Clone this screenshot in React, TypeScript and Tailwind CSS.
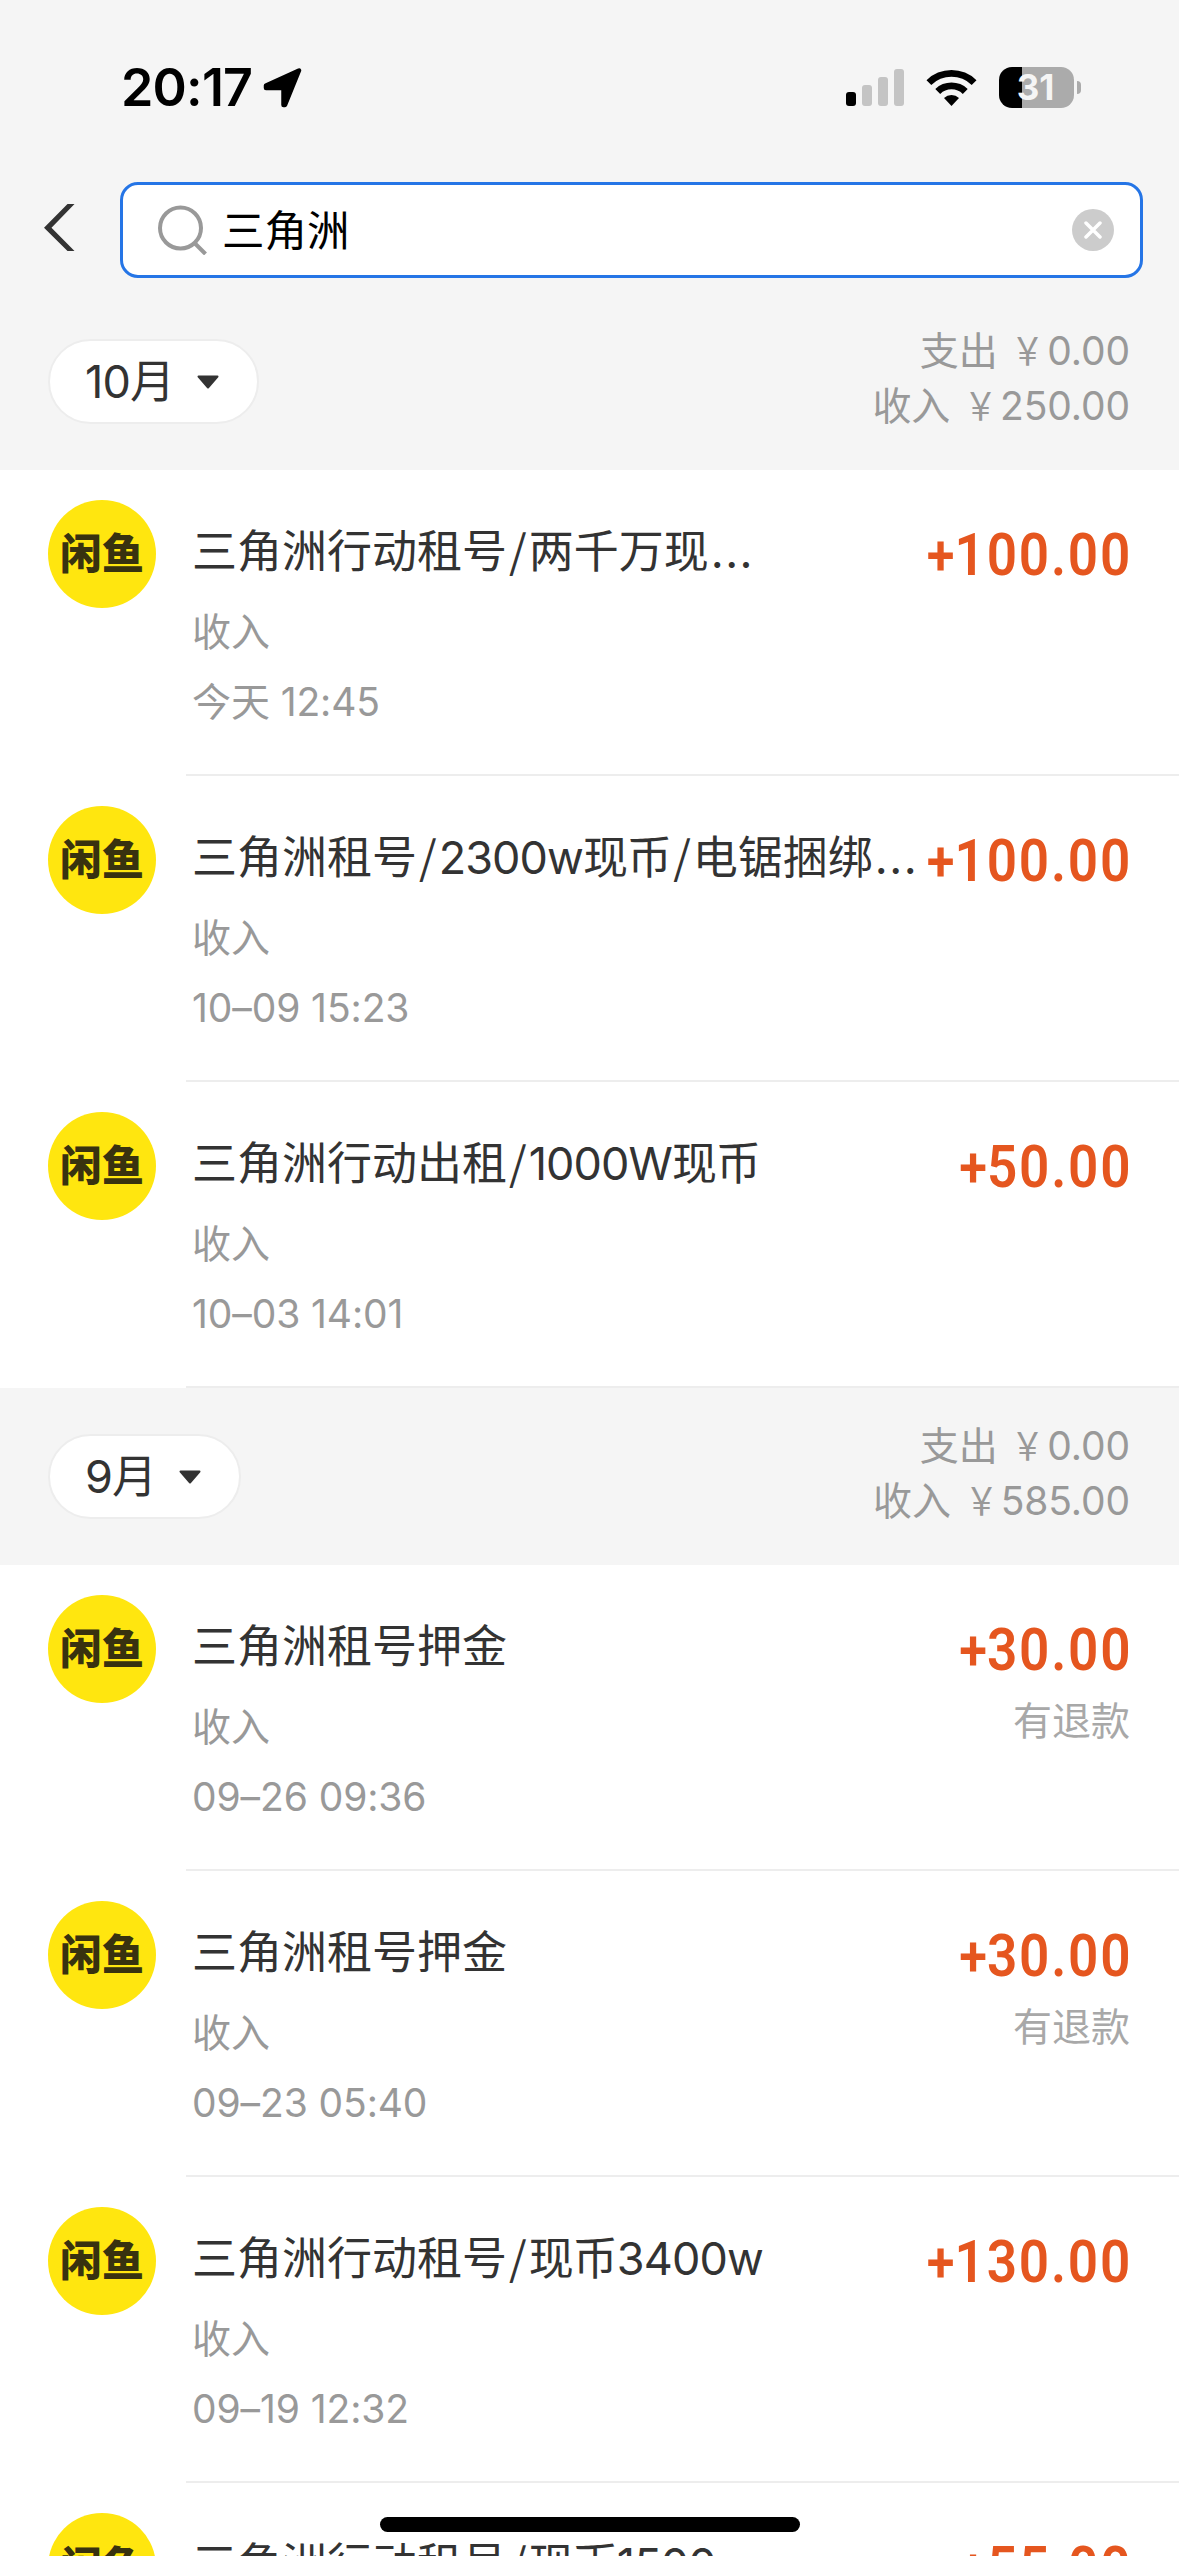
import { Fragment, useState } from "react";

type Bill = {
  id: number;
  title: string;
  kind: string;
  time: string;
  amount: string;
  note?: string;
};

type Month = {
  label: string;
  expense: string;
  income: string;
  bills: Bill[];
};

const months: Month[] = [
  {
    label: "10月",
    expense: "0.00",
    income: "250.00",
    bills: [
      { id: 1, title: "三角洲行动租号/两千万现...", kind: "收入", time: "今天 12:45", amount: "100.00" },
      { id: 2, title: "三角洲租号/2300w现币/电锯捆绑...", kind: "收入", time: "10–09 15:23", amount: "100.00" },
      { id: 3, title: "三角洲行动出租/1000W现币", kind: "收入", time: "10–03 14:01", amount: "50.00" },
    ],
  },
  {
    label: "9月",
    expense: "0.00",
    income: "585.00",
    bills: [
      { id: 4, title: "三角洲租号押金", kind: "收入", time: "09–26 09:36", amount: "30.00", note: "有退款" },
      { id: 5, title: "三角洲租号押金", kind: "收入", time: "09–23 05:40", amount: "30.00", note: "有退款" },
      { id: 6, title: "三角洲行动租号/现币3400w", kind: "收入", time: "09–19 12:32", amount: "130.00" },
      { id: 7, title: "三角洲行动租号/现币1500", kind: "收入", time: "", amount: "55.00" },
    ],
  },
];

function StatusBar() {
  return (
    <div className="flex h-[176px] items-start justify-between pr-[98px] pl-[121px] pt-[67px]">
      <div className="flex h-[42px] items-center">
        <span className="text-[52px] leading-[42px] font-semibold tracking-[-0.8px] text-black">20:17</span>
        <svg className="ml-[11px]" width="40" height="40" viewBox="0 0 40 40">
          <path d="M3 17.500 36 2.500 22 37 20.500 37V20H3Z" fill="#000" stroke="#000" strokeWidth="4.500" strokeLinejoin="round" />
        </svg>
      </div>
      <div className="flex h-[41px] items-center">
        <svg width="58" height="37" viewBox="0 0 58 37">
          <rect x="0" y="23" width="10" height="14" rx="3" fill="#000" />
          <rect x="16" y="16" width="10" height="21" rx="3" fill="#c4c4c4" />
          <rect x="32" y="8" width="10" height="29" rx="3" fill="#c4c4c4" />
          <rect x="48" y="0" width="10" height="37" rx="3" fill="#c4c4c4" />
        </svg>
        <svg className="ml-[22px]" width="51" height="37" viewBox="0 0 51 37">
          <path d="M0.500 11.200a35.500 35.500 0 0 1 50 0l-4.800 4.800a28.700 28.700 0 0 0-40.400 0z" />
          <path d="M9.300 20a23.200 23.200 0 0 1 32.400 0l-4.900 4.900a16.300 16.300 0 0 0-22.600 0z" />
          <path d="M18 28.900a10.900 10.900 0 0 1 15 0L25.500 37z" />
        </svg>
        <div className="ml-[22px] flex h-[41px] w-[75px] items-center justify-center rounded-[13px] bg-[linear-gradient(90deg,#000_0_23px,#ababab_23px)]">
          <span className="mr-[2px] text-[35px] leading-[41px] font-bold text-[#f5f5f5]">31</span>
        </div>
        <span className="ml-[3px] h-[13px] w-[4px] rounded-r-full bg-[#ababab]" />
      </div>
    </div>
  );
}

function SearchBar() {
  const [query, setQuery] = useState("三角洲");

  return (
    <div className="flex items-center pr-[36px] pl-[44px] pt-[6px]">
      <svg className="mb-[4px]" width="32" height="48" viewBox="0 0 32 48">
        <path d="M23.500 0H30.500L7.500 23.700 30.500 47H23.500L0 23.700Z" fill="#333" />
      </svg>
      <div className="ml-[44px] flex h-[96px] flex-1 items-center rounded-[18px] border-[3px] border-[#2575e6] bg-white pr-[26px] pl-[35px]">
        <svg width="50" height="50" viewBox="0 0 50 50" fill="none" stroke="#999" strokeWidth="4">
          <circle cx="22.500" cy="23" r="20.500" />
          <path d="M37 38.500 47.500 49" />
        </svg>
        <input
          value={query}
          onChange={e => setQuery(e.target.value)}
          className="mt-[2px] ml-[14px] min-w-0 flex-1 bg-transparent text-[42.500px] leading-[60px] text-black outline-none"
        />
        <button onClick={() => setQuery("")} className="flex size-[42px] items-center justify-center rounded-full bg-[#ccc]">
          <svg width="18" height="18" viewBox="0 0 18 18" stroke="#fff" strokeWidth="3.500" strokeLinecap="round">
            <path d="M2 2 16 16M16 2 2 16" />
          </svg>
        </button>
      </div>
    </div>
  );
}

function Yen() {
  return <span className="inline-block scale-x-[0.85]">￥</span>;
}

function MonthHeader({ month }: { month: Month }) {
  return (
    <div className="flex h-[177px] shrink-0 items-start justify-between bg-[#f5f5f5] pr-[49px] pl-[48px]">
      <button className="mt-[46px] flex h-[85px] items-center rounded-full border-2 border-[#ededed] bg-white pr-[38px] pl-[35px]">
        <span className="text-[45px] leading-[60px] tracking-[-0.8px] text-[#333]">{month.label}</span>
        <svg className="ml-[23px]" width="22" height="14" viewBox="0 0 22 14">
          <path d="M1.500 1.500H20.500L11 12.500Z" fill="#333" stroke="#333" strokeWidth="2" strokeLinejoin="round" />
        </svg>
      </button>
      <div className="mt-[30px] text-right text-[39px] leading-[55px] tracking-[-0.1px] text-[#999]">
        <p>支出 <Yen />{month.expense}</p>
        <p>收入 <Yen />{month.income}</p>
      </div>
    </div>
  );
}

function Title({ text }: { text: string }) {
  const parts = text.replace("...", "").split("/");
  return (
    <p className="mt-[52px] h-[60px] text-[45px] leading-[60px] text-[#333]">
      {parts.map((part, i) => (
        <Fragment key={i}>
          {i > 0 && <span className="mx-[2px] font-['Noto_Sans_CJK_SC'] leading-none">/</span>}
          <span className={/\d/.test(part) ? "tracking-[-0.9px]" : ""}>{part}</span>
        </Fragment>
      ))}
      {text.endsWith("...") && <span className="ml-[2px] tracking-[1.5px]">...</span>}
    </p>
  );
}

function BillRow({ bill }: { bill: Bill }) {
  return (
    <div className="flex h-[306px] shrink-0 bg-white pl-[48px]">
      <div className="mt-[30px] flex size-[108px] shrink-0 items-center justify-center rounded-full bg-[#ffe60f]">
        <span className="text-[42px] leading-[42px] font-black text-[#38320f]">闲鱼</span>
      </div>
      <div className="ml-[30px] flex min-w-0 flex-1 justify-between border-b-2 border-[#ededed] pr-[49px] pl-[6px]">
        <div className="w-0 whitespace-nowrap">
          <Title text={bill.title} />
          <p className="mt-[23px] text-[39px] leading-[54px] text-[#999]">{bill.kind}</p>
          <p className="mt-[16px] text-[39px] leading-[54px] tracking-[-0.1px] text-[#999]">{bill.time}</p>
        </div>
        <div className="text-right whitespace-nowrap">
          {/* narrow, open digits */}
          <p className="mt-[55px] mr-[-2px] origin-right scale-x-90 font-[Roboto] text-[59px] leading-[60px] font-semibold tracking-[2px] text-[#e5561f]">
            <span className="mr-[-2px] text-[56px]">+</span>
            {bill.amount}
          </p>
          {bill.note && <p className="mt-[13px] text-[39px] leading-[54px] text-[#a8a8a8]">{bill.note}</p>}
        </div>
      </div>
    </div>
  );
}

export default function App() {
  return (
    <div className="relative flex h-[2556px] w-[1179px] flex-col overflow-hidden bg-white font-['Inter','Noto_Sans_CJK_SC',sans-serif]">
      <div className="h-[293px] shrink-0 bg-[#f5f5f5]">
        <StatusBar />
        <SearchBar />
      </div>
      {months.map(m => (
        <div key={m.label} className="shrink-0">
          <MonthHeader month={m} />
          {m.bills.map(b => <BillRow key={b.id} bill={b} />)}
        </div>
      ))}
      <div className="absolute bottom-[24px] left-[380px] h-[15px] w-[420px] rounded-full bg-black" />
    </div>
  );
}
